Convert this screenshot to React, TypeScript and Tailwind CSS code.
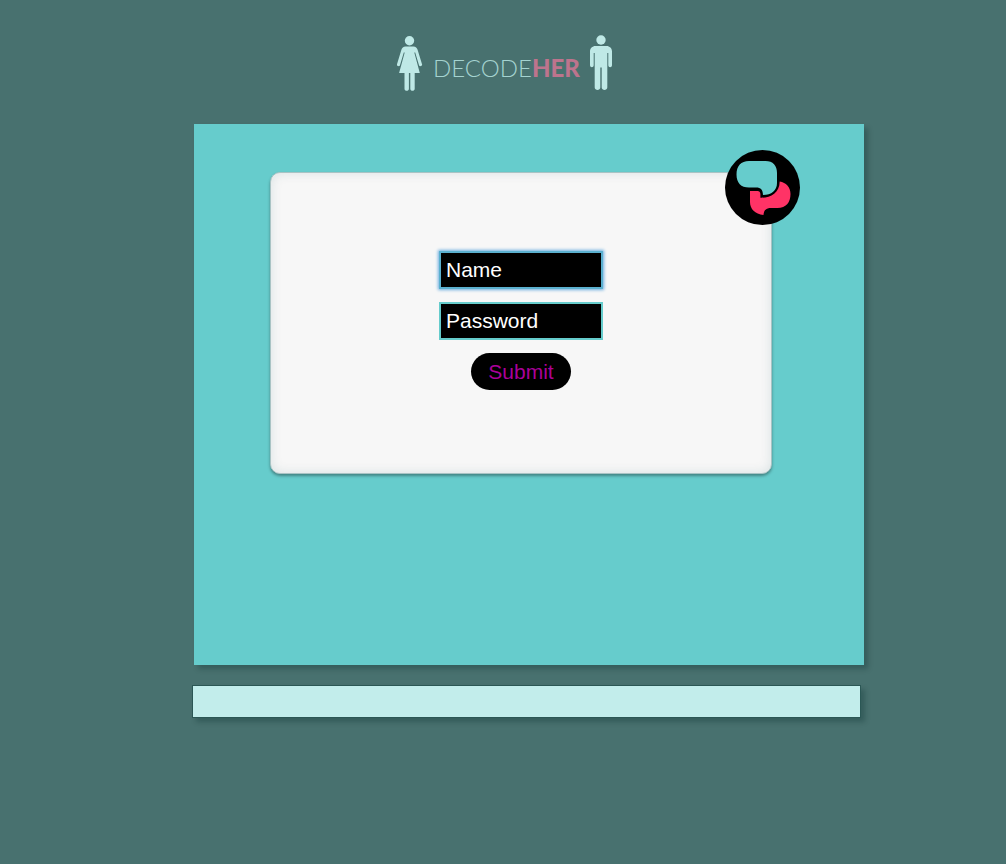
import React from "react";

function WomanIcon() {
  return (
    <svg viewBox="0 0 26 56" className="h-14 w-[26px] fill-[#bfe9e6]" aria-hidden="true">
      <circle cx="12.500" cy="5.700" r="4.700" />
      <path d="M8.500 11.500h8c2.200 0 3.500 1.300 4.100 3.200l4.500 14.800c.4 1.400-2.500 2.400-3 .9L18.200 17.500h-.9l5.500 20.500h-5.100v15.800c0 2.700-4.400 2.700-4.400 0V38h-1.400v15.800c0 2.700-4.400 2.700-4.400 0V38H2.100L7.700 17.500h-.9L2.900 30.400c-.5 1.500-3.400.5-3-.9l4.500-14.800C5 12.800 6.300 11.500 8.500 11.500z" />
    </svg>
  );
}

function ManIcon() {
  return (
    <svg viewBox="0 0 22 56" className="h-14 w-[22px] fill-[#bfe9e6]" aria-hidden="true">
      <circle cx="11" cy="5" r="4.700" />
      <path d="M5.500 11h11c3.200 0 5.500 2.300 5.500 5.500v13.700c0 2.600-3.700 2.600-3.700 0V18h-1v34.500c0 3.300-5.600 3.300-5.600 0V32.500h-1.400v20c0 3.300-5.600 3.300-5.600 0V18h-1v12.200c0 2.600-3.700 2.600-3.700 0V16.500C0 13.300 2.300 11 5.500 11z" />
    </svg>
  );
}

function ChatBadge() {
  return (
    <svg viewBox="0 0 75 75" className="absolute -top-[23px] -right-[29px] size-[75px]" aria-hidden="true">
      <circle cx="37.500" cy="37.500" r="37.500" fill="#000" />
      <path
        d="M25 41h7.500c1.800 0 2.800 1 2.900 3v3.700C45 48 54.500 43.500 54.700 31.500 61 32.500 65.500 37 65.500 44c0 8.500-4.500 14-13 14H46c-5 0-7 2-7.500 7C30 64 25 59 25 52z"
        fill="#ff3366"
      />
      <path
        d="M24 11h16.500C48 11 52 15.500 52 23v10c0 7.500-5.500 12-14 12-.3-5.500-2-7.500-7-7.500h-7C16 37.500 11.500 33 11.500 24.500S16 11 24 11z"
        fill="#66cccc"
      />
    </svg>
  );
}

const fieldClass =
  "h-[38px] w-[164px] border-2 bg-black px-[5px] text-[21px] text-white outline-none placeholder:text-white placeholder:opacity-100";

export default function App() {
  return (
    <div className="min-h-screen bg-[#48716f] font-['Liberation_Sans',Arial,sans-serif]">
      <header className="flex justify-center pt-[35px] pl-[3px]">
        <a href="#" className="flex items-start gap-[10px]">
          <WomanIcon />
          <span className="pt-[17px] font-['Lato_Light','Lato',sans-serif] text-2xl leading-8 font-normal text-[#a5d3d0]">
            DECODE<span className="font-['Lato',sans-serif] font-black text-[#bd748d]">HER</span>
          </span>
          <ManIcon />
        </a>
      </header>

      <div className="pt-[33px] pl-[52px]">
        <div className="mx-auto max-w-[670px]">
          <main className="min-h-[541px] bg-[#66cccc] pt-12 pr-[92px] pl-[76px] shadow-[4px_4px_5px_rgba(0,40,40,0.28)]">
            <section className="relative rounded-[10px] border border-[#a9c3c4] bg-[#f7f7f7] pt-[78px] pb-[83px] shadow-[0_2px_3px_rgba(0,0,0,0.35),inset_0_0_12px_rgba(0,80,90,0.12)]">
              <form className="flex flex-col items-center gap-[13px]" onSubmit={(e) => e.preventDefault()}>
                <input
                  type="text"
                  aria-label="Name"
                  placeholder="Name"
                  className={`${fieldClass} border-[#5bb0cf] shadow-[0_0_3px_1px_#6caee0]`}
                />
                <input
                  type="password"
                  aria-label="Password"
                  placeholder="Password"
                  className={`${fieldClass} border-[#66cccc]`}
                />
                <button
                  type="submit"
                  className="h-[37px] w-[100px] rounded-full bg-black text-[21px] leading-[37px] text-[#aa0099]"
                >
                  Submit
                </button>
              </form>
              <ChatBadge />
            </section>
          </main>
          <footer className="mt-5 mr-[3px] -ml-[2px] h-[33px] border border-[#2b5755] bg-[#c2edeb] shadow-[4px_4px_5px_rgba(0,40,40,0.28)]" />
        </div>
      </div>
    </div>
  );
}
